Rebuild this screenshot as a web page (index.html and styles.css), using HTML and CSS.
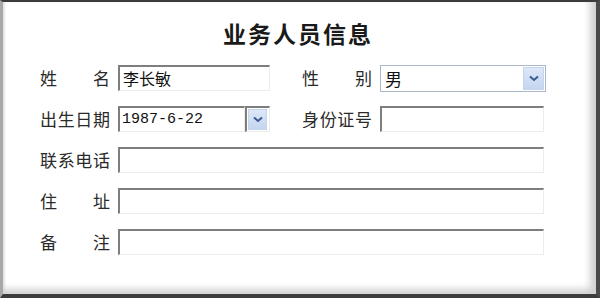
FILE: index.html
```html
<!DOCTYPE html>
<html lang="zh-CN">
  <head>
    <meta charset="UTF-8" />
    <title>业务人员信息</title>
    <link rel="stylesheet" href="styles.css">
  </head>
  <body>
    <div class="frame">
      <h2 class="title">业务人员信息</h2>

      <div class="form">
        <div class="row">
          <div class="field">
            <label class="label">姓　　名</label>
            <div class="input short">李长敏</div>
          </div>
          <div class="field">
            <label class="label">性　　别</label>
            <div class="select">
              <span class="select-text">男</span>
              <span class="drop"><svg width="10" height="7" viewBox="0 0 10 7"><path d="M1 1.5 L5 5 L9 1.5" fill="none" stroke="#3a5a8c" stroke-width="2"/></svg></span>
            </div>
          </div>
        </div>

        <div class="row">
          <div class="field">
            <label class="label">出生日期</label>
            <div class="combo">
              <div class="input date">1987-6-22</div>
              <div class="combo-btn">
                <span class="drop"><svg width="10" height="7" viewBox="0 0 10 7"><path d="M1 1.5 L5 5 L9 1.5" fill="none" stroke="#3a5a8c" stroke-width="2"/></svg></span>
              </div>
            </div>
          </div>
          <div class="field">
            <label class="label">身份证号</label>
            <div class="input long"></div>
          </div>
        </div>

        <div class="row">
          <div class="field wide">
            <label class="label">联系电话</label>
            <div class="input full"></div>
          </div>
        </div>

        <div class="row">
          <div class="field wide">
            <label class="label">住　　址</label>
            <div class="input full"></div>
          </div>
        </div>

        <div class="row">
          <div class="field wide">
            <label class="label">备　　注</label>
            <div class="input full"></div>
          </div>
        </div>
      </div>
    </div>
  </body>
</html>
```

FILE: styles.css
```css
html,
body {
  margin: 0;
  padding: 0;
  background: #fff;
}

body {
  width: 600px;
  height: 298px;
  font-family: "Noto Sans CJK SC", "Liberation Sans", sans-serif;
  color: #222;
}

.frame {
  box-sizing: border-box;
  width: 600px;
  height: 298px;
  border-top: 2px solid #3c3c3c;
  border-left: 3px solid #a8a8a8;
  border-right: 4px solid #4a4a4a;
  border-bottom: 4px solid #3c3c3c;
  box-shadow: inset -8px -7px 7px -2px #d0d0d0, inset 2px 0 2px #e4e4e4;
  background: #fff;
  padding: 0 0 0 37px;
}

.title {
  margin: 0;
  padding: 17px 0 0;
  height: 46px;
  box-sizing: border-box;
  width: 516px;
  text-align: center;
  font-size: 23px;
  line-height: 28px;
  font-weight: bold;
  color: #1a1a1a;
  letter-spacing: 2px;
}

.form {
  display: flex;
  flex-direction: column;
  gap: 15px;
  padding-top: 17px;
  width: 504px;
}

.row {
  display: flex;
  gap: 32px;
  height: 26px;
}

.field {
  display: flex;
  align-items: center;
  gap: 8px;
}

.field.wide {
  flex: 1;
}

.label {
  width: 70px;
  font-size: 17px;
  line-height: 26px;
  white-space: nowrap;
  color: #2a2a2a;
  text-align-last: justify;
}

.input {
  box-sizing: border-box;
  height: 26px;
  border-top: 2px solid #7e7e7e;
  border-left: 2px solid #7e7e7e;
  border-right: 1px solid #ececec;
  border-bottom: 1px solid #ececec;
  background: #fff;
  padding: 0 3px;
  font-size: 16px;
  line-height: 22px;
  color: #111;
}

.input.short {
  width: 152px;
}

.input.long {
  width: 164px;
}

.input.full {
  flex: 1;
}

.combo {
  display: flex;
  width: 152px;
  height: 26px;
}

.input.date {
  width: 127px;
  font-family: "Liberation Mono", monospace;
  font-size: 15px;
  line-height: 23px;
  padding-left: 2px;
}

.combo-btn {
  box-sizing: border-box;
  width: 25px;
  height: 26px;
  border-top: 2px solid #7e7e7e;
  border-left: 2px solid #7e7e7e;
  border-right: 1px solid #ececec;
  border-bottom: 1px solid #ececec;
  padding: 1px 2px 1px 1px;
  display: flex;
}

.select {
  box-sizing: border-box;
  width: 166px;
  height: 27px;
  border: 1px solid #a9b8cc;
  background: #fff;
  display: flex;
  align-items: stretch;
  padding: 1px;
}

.select-text {
  flex: 1;
  font-size: 17px;
  line-height: 23px;
  padding-left: 3px;
  color: #111;
}

.drop {
  width: 19px;
  display: flex;
  align-items: center;
  justify-content: center;
  background: linear-gradient(#dde8f8, #c3d5f0);
  border: 1px solid #c6d4ea;
}

.combo-btn .drop {
  flex: 1;
}
```
